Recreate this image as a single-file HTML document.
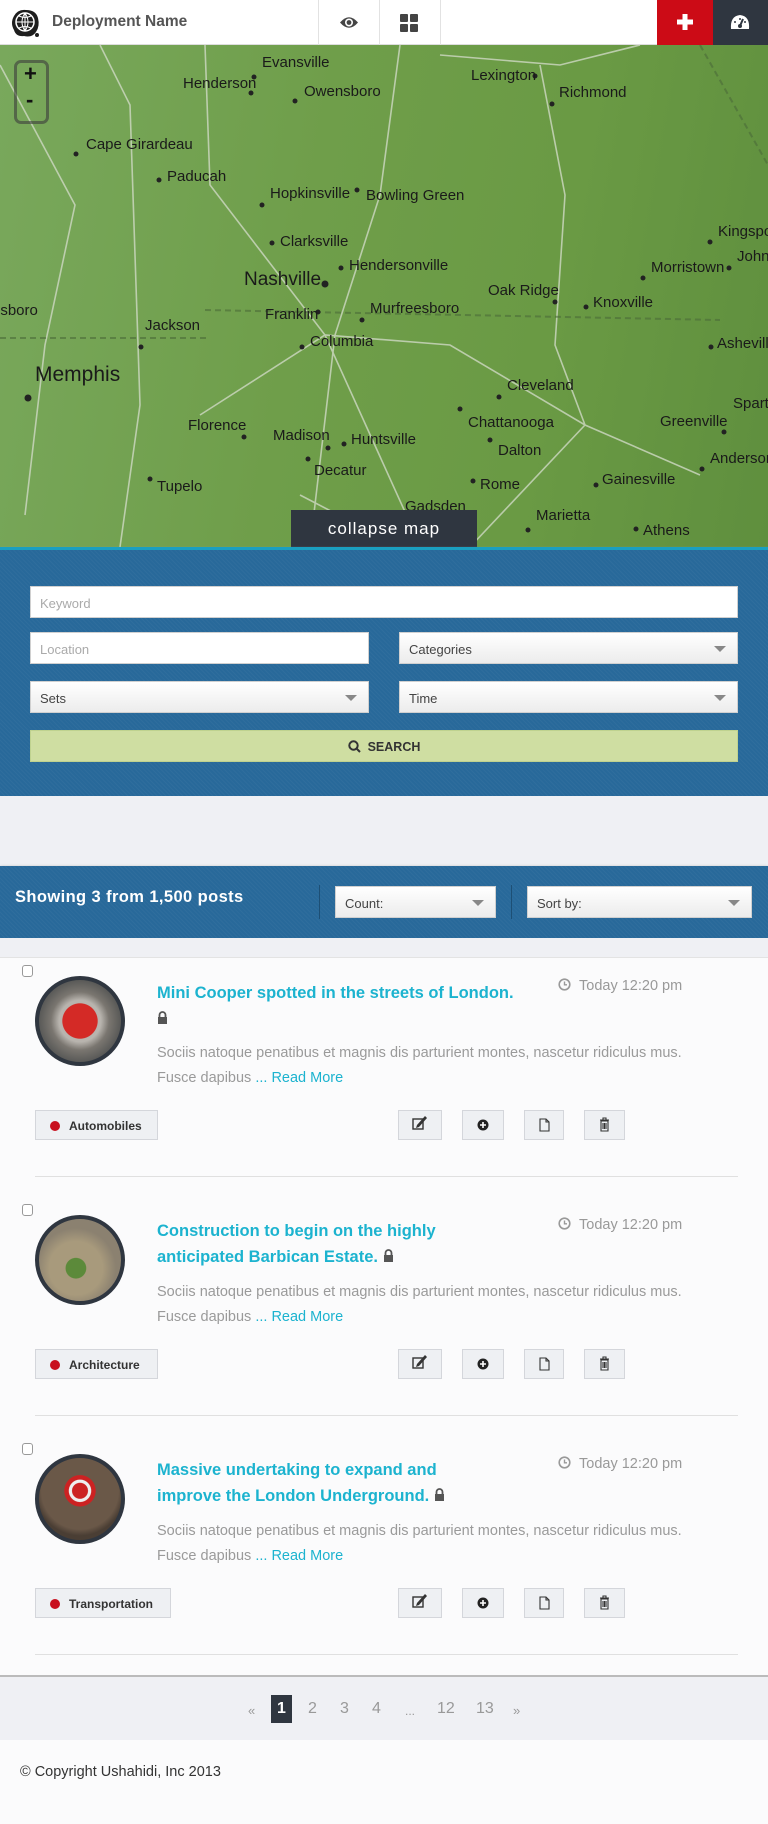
<!DOCTYPE html>
<html><head><meta charset="utf-8"><style>
*{box-sizing:border-box;margin:0;padding:0}
body{width:768px;height:1824px;background:#fbfbfc;font-family:"Liberation Sans",sans-serif;position:relative;overflow:hidden}
.a{position:absolute}
.hdr{left:0;top:0;width:768px;height:45px;background:#fff;border-bottom:1px solid #ddd}
.vl{top:0;width:1px;height:45px;background:#e2e2e2}
.map{left:0;top:45px;width:768px;height:502px;background:linear-gradient(100deg,#79a85c 0%,#6f9e4a 40%,#6a9a44 70%,#5f8f3e 100%);overflow:hidden}
.map text{font-family:"Liberation Sans Narrow","Liberation Sans",sans-serif;font-size:15px;fill:#1a1a1a}
.blue{background:#28699a;background-image:repeating-linear-gradient(45deg,rgba(255,255,255,.03) 0 1px,transparent 1px 3px)}
.inp{background:#fff;border:1px solid #d0d0d0;height:32px;font-size:13px;color:#aaa;padding:9px 9px}
.sel{background:linear-gradient(#fff,#ececec);border:1px solid #d0d0d0;height:32px;font-size:13px;color:#444;padding:9px 9px}
.sel:after{content:"";position:absolute;right:11px;top:13px;border-left:6px solid transparent;border-right:6px solid transparent;border-top:6px solid #888}
.post{left:0;width:768px;height:239px}
.cb{left:22px;top:0;width:11px;height:12px;border:1px solid #999;border-radius:3px;background:#fff}
.av{left:35px;top:11px;width:90px;height:90px;border-radius:50%;border:4px solid #2f3640}
.ttl{left:157px;color:#1cb3cf;font-weight:bold;font-size:16.5px;line-height:26px;width:330px}
.tm{left:558px;top:13px;font-size:14.5px;color:#999}
.txt{left:157px;font-size:14.5px;color:#9a9a9a;line-height:25px;width:600px}
.txt span{color:#1cb3cf}
.tag{left:35px;width:123px;height:30px;background:#eef0f3;border:1px solid #d4d6db;font-size:12px;font-weight:bold;color:#333;padding:8px 0 0 33px}
.tag:before{content:"";position:absolute;left:14px;top:10px;width:10px;height:10px;border-radius:50%;background:#c8101e}
.btn{height:30px;background:#eef0f3;border:1px solid #d4d6db}
.sep{left:35px;width:703px;height:1px;background:#e0e0e0}
.pg{top:1700px;font-size:16px;color:#999}
</style></head><body>
<div class="a hdr">
 <svg class="a" style="left:10px;top:8px" width="30" height="30" viewBox="0 0 30 30"><path d="M4 8 Q8 1 16 2 Q26 2 28 10 Q30 18 26 24 Q22 30 14 28 Q6 29 4 22 Q0 15 4 8Z" fill="#1e1e1e"/><circle cx="15" cy="14" r="9" fill="none" stroke="#fff" stroke-width="1.5"/><path d="M6 14H24M15 5V23M9 8Q15 11 21 8M9 20Q15 17 21 20M15 5Q9 14 15 23M15 5Q21 14 15 23" stroke="#fff" stroke-width="1" fill="none"/><circle cx="27" cy="27" r="2" fill="#1e1e1e"/></svg>
 <div class="a" style="left:52px;top:13px;font-size:15.5px;font-weight:bold;color:#555">Deployment Name</div>
 <div class="a vl" style="left:318px"></div><div class="a vl" style="left:379px"></div><div class="a vl" style="left:440px"></div>
 <svg class="a" style="left:339px;top:15px" width="20" height="15" viewBox="0 0 20 15"><path d="M1 7.5Q10 -3 19 7.5Q10 18 1 7.5Z" fill="#444"/><circle cx="10" cy="7.5" r="4" fill="#fff"/><circle cx="10" cy="7.5" r="2.4" fill="#444"/></svg>
 <svg class="a" style="left:400px;top:14px" width="18" height="18"><rect x="0" y="0" width="8" height="8" rx="1" fill="#444"/><rect x="10" y="0" width="8" height="8" rx="1" fill="#444"/><rect x="0" y="10" width="8" height="8" rx="1" fill="#444"/><rect x="10" y="10" width="8" height="8" rx="1" fill="#444"/></svg>
 <div class="a" style="left:657px;top:0;width:56px;height:45px;background:#cc0b16"></div>
 <svg class="a" style="left:677px;top:14px" width="16" height="16"><rect x="5.5" y="0" width="5" height="16" fill="#fff"/><rect x="0" y="5.5" width="16" height="5" fill="#fff"/></svg>
 <div class="a" style="left:713px;top:0;width:55px;height:45px;background:#2f3640"></div>
 <svg class="a" style="left:730px;top:14px" width="20" height="16" viewBox="0 0 20 16"><path d="M1 15Q0 2 10 1Q20 2 19 15Z" fill="#fff"/><path d="M10 12L13 5" stroke="#2f3640" stroke-width="2"/><circle cx="10" cy="12" r="2" fill="#2f3640"/><circle cx="5" cy="8" r="1" fill="#2f3640"/><circle cx="10" cy="5" r="1" fill="#2f3640"/><circle cx="15" cy="8" r="1" fill="#2f3640"/></svg>
</div>
<div class="a map">
<svg width="768" height="502">
<g stroke="#cfd9c4" stroke-width="1.6" fill="none" opacity=".8">
<path d="M0 20 L75 160 L45 300 L25 470"/><path d="M100 0 L130 60 L140 360 L120 502"/><path d="M205 0 L210 140 L325 290 L420 500"/><path d="M400 0 L380 150 L335 290 L310 502"/><path d="M540 20 L565 150 L555 300 L585 380"/><path d="M200 370 L325 290 L450 300 L585 380 L700 430"/><path d="M585 380 L470 502"/><path d="M440 10 L560 20 L640 0"/><path d="M300 450 L400 502"/></g>
<g stroke="#4b6b38" stroke-width="2" stroke-dasharray="6,4" fill="none" opacity=".6"><path d="M205 265 L720 275"/><path d="M0 293 L210 293"/><path d="M0 540 L768 535"/><path d="M700 0 L768 120"/></g>
<g fill="#222">
<circle cx="254" cy="32" r="2.5"/><circle cx="251" cy="48" r="2.5"/><circle cx="295" cy="56" r="2.5"/><circle cx="535" cy="31" r="2.5"/><circle cx="552" cy="59" r="2.5"/><circle cx="76" cy="109" r="2.5"/><circle cx="159" cy="135" r="2.5"/><circle cx="262" cy="160" r="2.5"/><circle cx="357" cy="145" r="2.5"/><circle cx="272" cy="198" r="2.5"/><circle cx="341" cy="223" r="2.5"/><circle cx="325" cy="239" r="3.5"/><circle cx="318" cy="267" r="2.5"/><circle cx="362" cy="275" r="2.5"/><circle cx="302" cy="302" r="2.5"/><circle cx="141" cy="302" r="2.5"/><circle cx="28" cy="353" r="3.5"/><circle cx="555" cy="257" r="2.5"/><circle cx="586" cy="262" r="2.5"/><circle cx="643" cy="233" r="2.5"/><circle cx="710" cy="197" r="2.5"/><circle cx="729" cy="223" r="2.5"/><circle cx="711" cy="302" r="2.5"/><circle cx="499" cy="352" r="2.5"/><circle cx="460" cy="364" r="2.5"/><circle cx="490" cy="395" r="2.5"/><circle cx="724" cy="387" r="2.5"/><circle cx="244" cy="392" r="2.5"/><circle cx="328" cy="403" r="2.5"/><circle cx="344" cy="399" r="2.5"/><circle cx="308" cy="414" r="2.5"/><circle cx="702" cy="424" r="2.5"/><circle cx="150" cy="434" r="2.5"/><circle cx="473" cy="436" r="2.5"/><circle cx="596" cy="440" r="2.5"/><circle cx="528" cy="485" r="2.5"/><circle cx="636" cy="484" r="2.5"/></g>
<text x="262" y="22">Evansville</text><text x="183" y="43">Henderson</text><text x="304" y="51">Owensboro</text><text x="471" y="35">Lexington</text><text x="559" y="52">Richmond</text>
<text x="86" y="104">Cape Girardeau</text><text x="167" y="136">Paducah</text><text x="270" y="153">Hopkinsville</text><text x="366" y="155">Bowling Green</text><text x="280" y="201">Clarksville</text><text x="349" y="225">Hendersonville</text>
<text x="244" y="240" style="font-size:19px">Nashville</text><text x="265" y="274">Franklin</text><text x="370" y="268">Murfreesboro</text><text x="310" y="301">Columbia</text><text x="488" y="250">Oak Ridge</text><text x="593" y="262">Knoxville</text><text x="651" y="227">Morristown</text><text x="718" y="191">Kingsport</text><text x="737" y="216">Johns</text><text x="717" y="303">Asheville</text><text x="-8" y="270">esboro</text><text x="145" y="285">Jackson</text><text x="35" y="336" style="font-size:21px">Memphis</text><text x="507" y="345">Cleveland</text><text x="468" y="382">Chattanooga</text><text x="660" y="381">Greenville</text><text x="733" y="363">Sparta</text><text x="188" y="385">Florence</text><text x="273" y="395">Madison</text><text x="351" y="399">Huntsville</text><text x="498" y="410">Dalton</text><text x="710" y="418">Anderson</text><text x="314" y="430">Decatur</text><text x="480" y="444">Rome</text><text x="602" y="439">Gainesville</text><text x="157" y="446">Tupelo</text><text x="536" y="475">Marietta</text><text x="643" y="490">Athens</text><text x="405" y="466">Gadsden</text>
</svg>
<div class="a" style="left:14px;top:15px;width:35px;height:64px;border:3px solid rgba(60,60,60,.6);border-radius:7px"></div>
<div class="a" style="left:24px;top:16px;font-size:22px;font-weight:bold;color:#111">+</div>
<div class="a" style="left:26px;top:42px;font-size:22px;font-weight:bold;color:#111">-</div>
</div>
<div class="a" style="left:291px;top:510px;width:186px;height:37px;background:#2f3640;color:#fff;font-size:17px;letter-spacing:1px;text-align:center;padding-top:9px">collapse map</div>
<div class="a blue" style="left:0;top:547px;width:768px;height:249px;border-top:3px solid #1a9fc0;box-shadow:0 1px 2px #aaa"></div>
<div class="a inp" style="left:30px;top:586px;width:708px">Keyword</div>
<div class="a inp" style="left:30px;top:632px;width:339px">Location</div>
<div class="a sel" style="left:399px;top:632px;width:339px">Categories</div>
<div class="a sel" style="left:30px;top:681px;width:339px">Sets</div>
<div class="a sel" style="left:399px;top:681px;width:339px">Time</div>
<div class="a" style="left:30px;top:730px;width:708px;height:32px;background:#cfdea2;border:1px solid #bfd28f;text-align:center;font-size:12.5px;font-weight:bold;color:#333;padding-top:9px"><svg width="13" height="13" style="vertical-align:-2px;margin-right:7px"><circle cx="5.5" cy="5.5" r="4.2" fill="none" stroke="#333" stroke-width="2"/><path d="M8.5 8.5L12 12" stroke="#333" stroke-width="2"/></svg>SEARCH</div>
<div class="a" style="left:0;top:796px;width:768px;height:70px;background:#eff0f4"></div>
<div class="a blue" style="left:0;top:866px;width:768px;height:72px;box-shadow:0 1px 3px #999"></div>
<div class="a" style="left:15px;top:888px;font-size:16.5px;font-weight:bold;color:#fff;letter-spacing:.4px">Showing 3 from 1,500 posts</div>
<div class="a" style="left:319px;top:885px;width:1px;height:34px;background:#1d4f75"></div>
<div class="a" style="left:511px;top:885px;width:1px;height:34px;background:#1d4f75"></div>
<div class="a sel" style="left:335px;top:886px;width:161px">Count:</div>
<div class="a sel" style="left:527px;top:886px;width:225px">Sort by:</div>
<div class="a" style="left:0;top:938px;width:768px;height:20px;background:#eff0f4;border-bottom:1px solid #e3e3e3"></div>

<div class="a post" style="top:965px">
 <div class="a cb" style="top:0"></div>
 <div class="a av" style="background:radial-gradient(ellipse at 50% 50%,#d42a26 0 30%,#b8b4ae 31% 36%,#7a7670 50%,#5a5a58 70%)"></div>
 <div class="a ttl" style="top:15px;width:400px">Mini Cooper spotted in the streets of London.<br><svg width="11" height="13"><path d="M2.5 6V4a3 3 0 016 0v2" stroke="#555" stroke-width="1.8" fill="none"/><rect x="1" y="6" width="9" height="7" fill="#555"/></svg></div>
 <div class="a tm"><svg width="13" height="13" style="vertical-align:-1px;margin-right:8px"><circle cx="6.5" cy="6.5" r="5.3" fill="none" stroke="#999" stroke-width="1.6"/><path d="M6.5 3.5V6.8H9" stroke="#999" stroke-width="1.4" fill="none"/></svg>Today 12:20 pm</div>
 <div class="a txt" style="top:76px">Sociis natoque penatibus et magnis dis parturient montes, nascetur ridiculus mus.<br>Fusce dapibus <span>... Read More</span></div>
 <div class="a tag" style="top:145px">Automobiles</div>
 <div class="a btn" style="left:398px;top:145px;width:44px"></div><div class="a btn" style="left:462px;top:145px;width:42px"></div><div class="a btn" style="left:524px;top:145px;width:40px"></div><div class="a btn" style="left:584px;top:145px;width:41px"></div>
 <div class="a sep" style="top:211px"></div>
</div>

<div class="a post" style="top:1204px">
 <div class="a cb" style="top:0"></div>
 <div class="a av" style="background:radial-gradient(circle at 45% 60%,#5c8a3a 0 15%,#a89a7c 16% 40%,#8b8170 60%)"></div>
 <div class="a ttl" style="top:14px">Construction to begin on the highly anticipated Barbican Estate. <svg width="11" height="13"><path d="M2.5 6V4a3 3 0 016 0v2" stroke="#555" stroke-width="1.8" fill="none"/><rect x="1" y="6" width="9" height="7" fill="#555"/></svg></div>
 <div class="a tm"><svg width="13" height="13" style="vertical-align:-1px;margin-right:8px"><circle cx="6.5" cy="6.5" r="5.3" fill="none" stroke="#999" stroke-width="1.6"/><path d="M6.5 3.5V6.8H9" stroke="#999" stroke-width="1.4" fill="none"/></svg>Today 12:20 pm</div>
 <div class="a txt" style="top:76px">Sociis natoque penatibus et magnis dis parturient montes, nascetur ridiculus mus.<br>Fusce dapibus <span>... Read More</span></div>
 <div class="a tag" style="top:145px">Architecture</div>
 <div class="a btn" style="left:398px;top:145px;width:44px"></div><div class="a btn" style="left:462px;top:145px;width:42px"></div><div class="a btn" style="left:524px;top:145px;width:40px"></div><div class="a btn" style="left:584px;top:145px;width:41px"></div>
 <div class="a sep" style="top:211px"></div>
</div>

<div class="a post" style="top:1443px">
 <div class="a cb" style="top:0"></div>
 <div class="a av" style="background:radial-gradient(circle at 50% 40%,#c22 0 12%,#eee 13% 17%,#c22 18% 24%,#6a5848 25% 60%,#4a3e34 70%)"></div>
 <div class="a ttl" style="top:14px">Massive undertaking to expand and improve the London Underground. <svg width="11" height="13"><path d="M2.5 6V4a3 3 0 016 0v2" stroke="#555" stroke-width="1.8" fill="none"/><rect x="1" y="6" width="9" height="7" fill="#555"/></svg></div>
 <div class="a tm"><svg width="13" height="13" style="vertical-align:-1px;margin-right:8px"><circle cx="6.5" cy="6.5" r="5.3" fill="none" stroke="#999" stroke-width="1.6"/><path d="M6.5 3.5V6.8H9" stroke="#999" stroke-width="1.4" fill="none"/></svg>Today 12:20 pm</div>
 <div class="a txt" style="top:76px">Sociis natoque penatibus et magnis dis parturient montes, nascetur ridiculus mus.<br>Fusce dapibus <span>... Read More</span></div>
 <div class="a tag" style="top:145px;width:136px">Transportation</div>
 <div class="a btn" style="left:398px;top:145px;width:44px"></div><div class="a btn" style="left:462px;top:145px;width:42px"></div><div class="a btn" style="left:524px;top:145px;width:40px"></div><div class="a btn" style="left:584px;top:145px;width:41px"></div>
 <div class="a sep" style="top:211px"></div>
</div>

<svg class="a" style="left:0;top:0;pointer-events:none" width="768" height="1824">
<g id="ic">
<rect x="413" y="1119" width="10" height="10" fill="none" stroke="#333" stroke-width="1.4"/><path d="M417 1125L425 1116L427 1118L419 1127L416 1128Z" fill="#333"/>
<circle cx="483" cy="1125" r="5.5" fill="#222"/><path d="M480 1125H486M483 1122V1128" stroke="#fff" stroke-width="1.6"/>
<path d="M540 1119H546L549 1122V1131H540Z M546 1119V1122H549" fill="none" stroke="#333" stroke-width="1.1"/>
<path d="M600 1120H609M603 1120V1118H606V1120M601 1121H608V1131H601Z M603 1123V1129M604.5 1123V1129M606 1123V1129" fill="none" stroke="#333" stroke-width="1.1"/>
</g>
<use href="#ic" y="239"/><use href="#ic" y="478"/>
</svg>

<div class="a" style="left:0;top:1675px;width:768px;height:65px;background:#eff0f4;border-top:2px solid #bbb"></div>
<div class="a pg" style="left:248px;font-size:13px;top:1703px">«</div>
<div class="a" style="left:271px;top:1695px;width:21px;height:28px;background:#2f3640;color:#fff;font-weight:bold;font-size:16px;text-align:center;padding-top:5px">1</div>
<div class="a pg" style="left:308px">2</div><div class="a pg" style="left:340px">3</div><div class="a pg" style="left:372px">4</div><div class="a pg" style="left:405px;font-size:12px;top:1704px">...</div><div class="a pg" style="left:437px">12</div><div class="a pg" style="left:476px">13</div><div class="a pg" style="left:513px;font-size:13px;top:1703px">»</div>
<div class="a" style="left:20px;top:1764px;font-size:14.5px;color:#333">© Copyright Ushahidi, Inc 2013</div>
</body></html>
